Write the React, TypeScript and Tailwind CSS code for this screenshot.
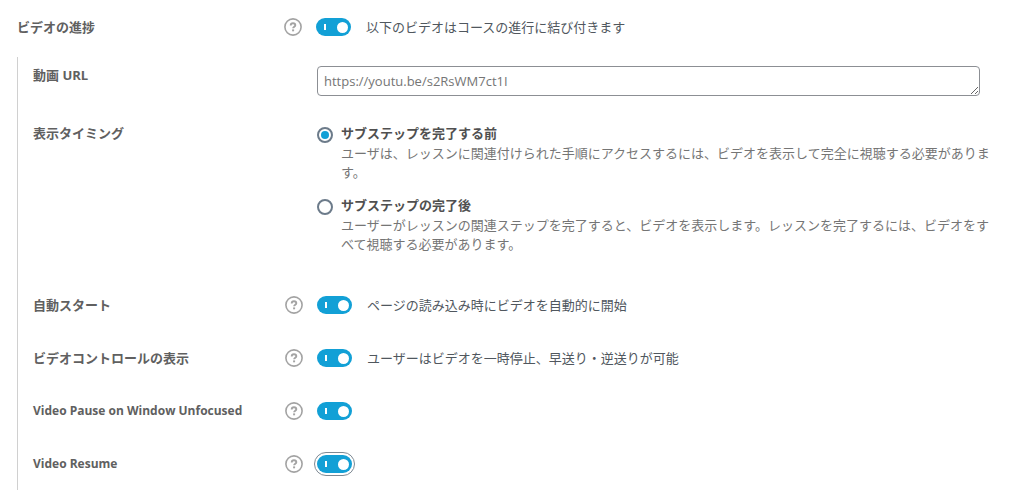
import { useState } from 'react';
import type { ReactNode } from 'react';

interface ToggleSetting {
  id: string;
  title: string;
  caption?: string;
  latin?: boolean;
  focused?: boolean;
}

interface TimingOption {
  value: string;
  title: string;
  description: string;
}

const TOGGLES: ToggleSetting[] = [
  { id: 'auto-start', title: '自動スタート', caption: 'ページの読み込み時にビデオを自動的に開始' },
  { id: 'show-controls', title: 'ビデオコントロールの表示', caption: 'ユーザーはビデオを一時停止、早送り・逆送りが可能' },
  { id: 'focus-pause', title: 'Video Pause on Window Unfocused', latin: true },
  { id: 'track-time', title: 'Video Resume', latin: true, focused: true },
];

const TIMINGS: TimingOption[] = [
  {
    value: 'before',
    title: 'サブステップを完了する前',
    description: 'ユーザは、レッスンに関連付けられた手順にアクセスするには、ビデオを表示して完全に視聴する必要があります。',
  },
  {
    value: 'after',
    title: 'サブステップの完了後',
    description: 'ユーザーがレッスンの関連ステップを完了すると、ビデオを表示します。レッスンを完了するには、ビデオをすべて視聴する必要があります。',
  },
];

function HelpButton({ title }: { title: string }) {
  return (
    <button type="button" aria-label={`${title} help`} className="block size-[18px] text-[#a3a3a3]">
      <svg viewBox="0 0 18 18" className="size-full" fill="none" stroke="currentColor">
        <circle cx="9" cy="9" r="8.1" strokeWidth="1.6" />
        <path d="M6.7 7.4c0-1.4 1-2.2 2.3-2.2s2.3.8 2.3 2c0 1.5-2.2 1.5-2.2 3.1" strokeWidth="1.9" />
        <path d="M9.1 11.4v1.9" strokeWidth="2" />
      </svg>
    </button>
  );
}

function Switch({ id, focused }: { id: string; focused?: boolean }) {
  const [on, setOn] = useState(true);

  return (
    <input
      id={id}
      type="checkbox"
      role="switch"
      checked={on}
      onChange={(e) => setOn(e.target.checked)}
      className={`flex h-[18px] w-[35px] shrink-0 appearance-none items-center justify-between rounded-full bg-[#8c8f94] pr-[3px] pl-2 checked:bg-[#12a0d6] before:h-[6px] before:w-[2px] before:bg-white before:content-[''] after:size-[11px] after:rounded-full after:bg-white after:content-[''] ${
        focused ? 'outline-1 outline-offset-2 outline-[#7e8993]' : 'outline-none'
      }`}
    />
  );
}

// Title, help icon and control share the same three columns in every row
function Row({ label, help, nested, children }: { label: ReactNode; help?: ReactNode; nested?: boolean; children: ReactNode }) {
  return (
    <div className={`grid ${nested ? 'grid-cols-[252px_32px_1fr]' : 'grid-cols-[267px_32px_1fr]'}`}>
      <div className="font-bold text-[#606060]">{label}</div>
      <div>{help}</div>
      <div className="min-w-0">{children}</div>
    </div>
  );
}

function ToggleRow({ setting, nested }: { setting: ToggleSetting; nested?: boolean }) {
  return (
    <Row
      nested={nested}
      label={
        <label htmlFor={setting.id} className={setting.latin ? 'block text-[12px] leading-[18px]' : 'block'}>
          {setting.title}
        </label>
      }
      help={<HelpButton title={setting.title} />}
    >
      <div className="flex items-center gap-[15px]">
        <Switch id={setting.id} focused={setting.focused} />
        {setting.caption && <span className="text-[#50575e]">{setting.caption}</span>}
      </div>
    </Row>
  );
}

export default function App() {
  const [url, setUrl] = useState('https://youtu.be/s2RsWM7ct1I');
  const [timing, setTiming] = useState('before');

  return (
    <form
      lang="ja"
      className="bg-white pt-[18px] pl-[17px] font-['Open_Sans','Noto_Sans_CJK_JP',sans-serif] text-[13px] leading-[18px]"
    >
      <ToggleRow setting={{ id: 'video-enabled', title: 'ビデオの進捗', caption: '以下のビデオはコースの進行に結び付きます' }} />

      <div className="mt-[21px] border-l border-[#d0d0d0] pt-[9px] pb-[17px] pl-[15px]">
        <Row nested label={<label htmlFor="video-url">動画 URL</label>}>
          <div className="pr-11">
            <textarea
              id="video-url"
              rows={1}
              value={url}
              onChange={(e) => setUrl(e.target.value)}
              className="block h-[30px] w-full overflow-hidden rounded-[4px] border border-[#8c8f94] px-[6px] py-[5px] text-[13px] leading-[18px] text-[#757575] outline-none"
            />
          </div>
        </Row>

        <div className="mt-7">
          <Row nested label={<span id="timing-label">表示タイミング</span>}>
            <div role="radiogroup" aria-labelledby="timing-label" className="flex flex-col gap-[14px] pr-7">
              {TIMINGS.map((option) => (
                <div key={option.value} className="grid grid-cols-[24px_1fr]">
                  <input
                    id={`timing-${option.value}`}
                    type="radio"
                    name="timing"
                    value={option.value}
                    checked={timing === option.value}
                    onChange={() => setTiming(option.value)}
                    aria-describedby={`timing-${option.value}-description`}
                    className="mt-[3px] flex size-4 appearance-none items-center justify-center rounded-full border-2 border-[#6c7b8a] checked:before:size-2 checked:before:rounded-full checked:before:bg-[#12a0d6] checked:before:content-['']"
                  />
                  <div className="leading-[19px]">
                    <label htmlFor={`timing-${option.value}`} className="block font-bold text-[#505050]">
                      {option.title}
                    </label>
                    <p id={`timing-${option.value}-description`} className="mt-px text-[#757575]">
                      {option.description}
                    </p>
                  </div>
                </div>
              ))}
            </div>
          </Row>
        </div>

        <div className="mt-[42px] flex flex-col gap-[35px]">
          {TOGGLES.map((setting) => (
            <ToggleRow key={setting.id} nested setting={setting} />
          ))}
        </div>
      </div>
    </form>
  );
}
